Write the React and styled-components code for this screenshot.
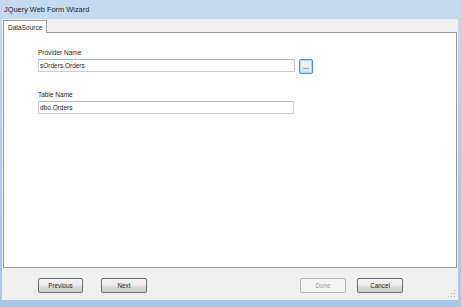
import React from 'react'
import styled, { createGlobalStyle } from 'styled-components'

const GlobalStyle = createGlobalStyle`
    html, body {
        margin: 0;
        padding: 0;
        background: #ffffff;
    }
    body {
        font-family: "Liberation Sans", Arial, sans-serif;
    }
`

const Window = styled.div`
    width: 461px;
    height: 307px;
    display: flex;
    flex-direction: column;
    box-sizing: border-box;
    background: linear-gradient(180deg, #c6dbf0 0%, #b3cdea 40%, #a9c6e6 100%);
    padding: 0 3px 7px 2px;
`

const TitleBar = styled.div`
    height: 19px;
    display: flex;
    align-items: center;
    padding-left: 2px;
    font-size: 7.4px;
    color: #1e1e1e;
`

const Body = styled.div`
    flex: 1;
    display: flex;
    flex-direction: column;
    background: #f0f0f0;
    padding: 0 1px;
    position: relative;
`

const TabStrip = styled.div`
    height: 13px;
    display: flex;
    align-items: flex-end;
`

const Tab = styled.div`
    height: 13px;
    box-sizing: border-box;
    padding: 0 4px;
    display: flex;
    align-items: center;
    background: #ffffff;
    border: 1px solid #9a9a9a;
    border-bottom: none;
    font-size: 6.5px;
    color: #1e1e1e;
    margin-bottom: -1px;
    position: relative;
    z-index: 1;
`

const Panel = styled.div`
    height: 236px;
    box-sizing: border-box;
    background: #ffffff;
    border: 1px solid #9a9a9a;
    padding: 16px 0 0 34px;
`

const Field = styled.div`
    display: flex;
    flex-direction: column;
    margin-bottom: ${p => p.$gap || 0}px;
`

const Label = styled.div`
    font-size: 6.5px;
    line-height: 8px;
    color: #1e1e1e;
    margin-bottom: ${p => p.$mb || 2}px;
`

const InputRow = styled.div`
    display: flex;
    align-items: flex-start;
    gap: 4px;
`

const TextBox = styled.div`
    width: ${p => p.$w}px;
    height: ${p => p.$h}px;
    box-sizing: border-box;
    border: 1px solid #c5cfd9;
    border-top-color: #aeb6bf;
    border-radius: 1px;
    padding-left: 1px;
    display: flex;
    align-items: center;
    font-size: 6.5px;
    color: #1e1e1e;
    background: #ffffff;
`

const BrowseButton = styled.div`
    width: 14px;
    height: 15px;
    box-sizing: border-box;
    border: 1px solid #3c9ad6;
    border-radius: 2px;
    box-shadow: inset 0 0 0 1px #a9dcf6;
    background: linear-gradient(180deg, #f4f4f4 0%, #ebebeb 50%, #dcdcdc 100%);
    display: flex;
    align-items: center;
    justify-content: center;
    padding-top: 3px;

    &::after {
        content: '';
        width: 6px;
        height: 1px;
        background: #a8a8a8;
    }
`

const Footer = styled.div`
    flex: 1;
    display: flex;
    align-items: flex-start;
    padding: 10px 54px 0 35px;
`

const Button = styled.div`
    width: ${p => p.$w || 46}px;
    height: 15px;
    box-sizing: border-box;
    border: 1px solid ${p => (p.$disabled ? '#b5b9bc' : '#707070')};
    border-radius: 2px;
    background: ${p =>
        p.$disabled
            ? '#f4f4f4'
            : 'linear-gradient(180deg, #f2f2f2 0%, #ebebeb 50%, #dddddd 51%, #cfcfcf 100%)'};
    display: flex;
    align-items: center;
    justify-content: center;
    font-size: 6.3px;
    color: ${p => (p.$disabled ? '#9a9a9a' : '#1e1e1e')};
    margin-right: ${p => p.$mr || 0}px;
`

const Spacer = styled.div`
    flex: 1;
`

const Grip = styled.svg`
    position: absolute;
    right: 2px;
    bottom: 2px;
`

function App() {
    return (
        <>
            <GlobalStyle />
            <Window>
                <TitleBar>JQuery Web Form Wizard</TitleBar>
                <Body>
                    <TabStrip>
                        <Tab>DataSource</Tab>
                    </TabStrip>
                    <Panel>
                        <Field $gap={17}>
                            <Label>Provider Name</Label>
                            <InputRow>
                                <TextBox $w={257} $h={13}>sOrders.Orders</TextBox>
                                <BrowseButton />
                            </InputRow>
                        </Field>
                        <Field>
                            <Label $mb={2}>Table Name</Label>
                            <TextBox $w={256} $h={13}>dbo.Orders</TextBox>
                        </Field>
                    </Panel>
                    <Footer>
                        <Button $w={45} $mr={18}>Previous</Button>
                        <Button $w={46}>Next</Button>
                        <Spacer />
                        <Button $w={46} $mr={11} $disabled>Done</Button>
                        <Button $w={46}>Cancel</Button>
                    </Footer>
                    <Grip width="8" height="8" viewBox="0 0 8 8">
                        <rect x="6" y="0" width="1" height="1" fill="#b8b8b8" />
                        <rect x="3" y="3" width="1" height="1" fill="#b8b8b8" />
                        <rect x="6" y="3" width="1" height="1" fill="#b8b8b8" />
                        <rect x="0" y="6" width="1" height="1" fill="#b8b8b8" />
                        <rect x="3" y="6" width="1" height="1" fill="#b8b8b8" />
                        <rect x="6" y="6" width="1" height="1" fill="#b8b8b8" />
                    </Grip>
                </Body>
            </Window>
        </>
    )
}

export default App
